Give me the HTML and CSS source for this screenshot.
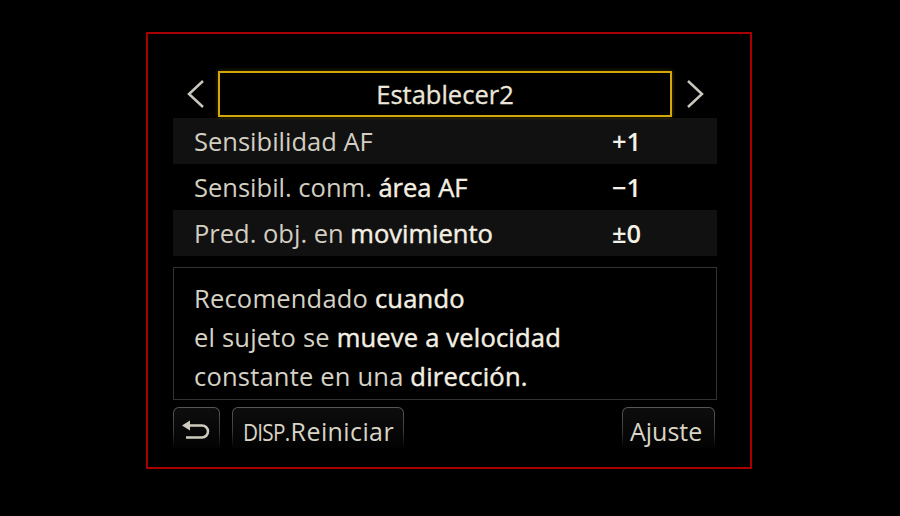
FILE: index.html
```html
<!DOCTYPE html>
<html lang="es">
<head>
  <meta charset="UTF-8" />
  <link rel="stylesheet" href="styles.css">
</head>
<body>
  <div class="frame">
    <div class="screen">
      <div class="header">
        <span class="arrow">
          <svg width="22" height="30" viewBox="0 0 22 30"><polyline points="18,2 4,15 18,28" /></svg>
        </span>
        <div class="title">Establecer2</div>
        <span class="arrow">
          <svg width="22" height="30" viewBox="0 0 22 30"><polyline points="4,2 18,15 4,28" /></svg>
        </span>
      </div>

      <div class="rows">
        <div class="row shade">
          <span class="label">Sensibilidad AF</span>
          <span class="value">+1</span>
        </div>
        <div class="row">
          <span class="label">Sensibil. conm. <b>área AF</b></span>
          <span class="value">&minus;1</span>
        </div>
        <div class="row shade">
          <span class="label">Pred. obj. en <b>movimiento</b></span>
          <span class="value">&plusmn;0</span>
        </div>
      </div>

      <div class="desc">
        <p>Recomendado <b>cuando</b></p>
        <p>el sujeto se <b>mueve a velocidad</b></p>
        <p>constante en una <b>dirección.</b></p>
      </div>

      <div class="buttons">
        <div class="btn back">
          <svg width="32" height="22" viewBox="0 0 32 22">
            <path class="line" d="M7 5.5 H21 A6 6 0 0 1 21 17.5 H5" />
            <path class="head" d="M1 5.5 L9 0.5 V10.5 Z" />
          </svg>
        </div>
        <div class="btn reset"><span class="disp">DISP.</span>Reiniciar</div>
        <div class="spacer"></div>
        <div class="btn set">Ajuste</div>
      </div>
    </div>
  </div>
</body>
</html>
```

FILE: styles.css
```css
body {
  margin: 0;
  background: #000;
  font-family: 'Open Sans', 'Noto Sans', sans-serif;
  color: #dcd8ca;
}

.frame {
  width: 602px;
  height: 433px;
  margin: 32px 0 0 146px;
  border: 2px solid #a80000;
  box-sizing: content-box;
}

.screen {
  width: 544px;
  margin: 37px 0 0 25px;
}

/* title bar */
.header {
  display: flex;
  align-items: center;
  height: 46px;
}

.arrow {
  width: 45px;
  display: flex;
  justify-content: center;
}

.arrow polyline {
  fill: none;
  stroke: #c9c6bd;
  stroke-width: 2.5;
}

.title {
  flex: 1;
  height: 42px;
  border: 2px solid #d3a60c;
  box-shadow: 0 0 4px rgba(210, 165, 10, 0.35);
  font-size: 25.5px;
  line-height: 42px;
  text-align: center;
  color: #ebe7da;
  -webkit-text-stroke: 0.3px #ebe7da;
}

/* settings rows */
.rows {
  margin-top: 1px;
}

.row {
  display: flex;
  align-items: center;
  height: 46px;
  padding-left: 21px;
  font-size: 25.5px;
}

.row.shade {
  background: #111;
}

.label {
  flex: 1;
  color: #d2cec1;
}

.label b, .desc b {
  font-weight: 400;
  color: #f3efe2;
  -webkit-text-stroke: 0.45px #f3efe2;
}

.value {
  width: 105px;
  font-weight: 600;
  color: #f4f1e6;
}

/* description */
.desc {
  margin-top: 11px;
  height: 131px;
  border: 1px solid #323232;
  padding: 0 20px;
  box-sizing: content-box;
}

.desc p {
  margin: 0;
  font-size: 25.5px;
  line-height: 39px;
  color: #d6d2c5;
  letter-spacing: 0.2px;
}

.desc p:first-child {
  margin-top: 11px;
}

/* soft keys */
.buttons {
  display: flex;
  gap: 12px;
  margin: 7px 2px 0 0;
  height: 41px;
}

.btn {
  height: 41px;
  border: 1px solid transparent;
  border-bottom: none;
  border-radius: 6px 6px 0 0;
  background: linear-gradient(#0d0d0d, #030303) padding-box,
              linear-gradient(#565656, #3a3a3a 60%, #000) border-box;
  font-size: 25px;
  line-height: 47px;
  color: #d8d4c6;
  padding: 0 8px;
  box-sizing: border-box;
}

.back {
  width: 47px;
  display: flex;
  align-items: center;
  justify-content: center;
  padding: 6px 0 0;
}

.back .line {
  fill: none;
  stroke: #cfcbbe;
  stroke-width: 2.5;
}

.back .head {
  fill: #cfcbbe;
}

.reset {
  width: 172px;
  padding-left: 10px;
  letter-spacing: 0.4px;
}

.disp {
  display: inline-block;
  font-size: 23px;
  letter-spacing: -0.8px;
  transform: scaleX(0.9);
  transform-origin: left;
  margin-right: -4px;
}

.spacer {
  flex: 1;
}

.set {
  width: 93px;
  padding: 0 0 0 7px;
}
```
